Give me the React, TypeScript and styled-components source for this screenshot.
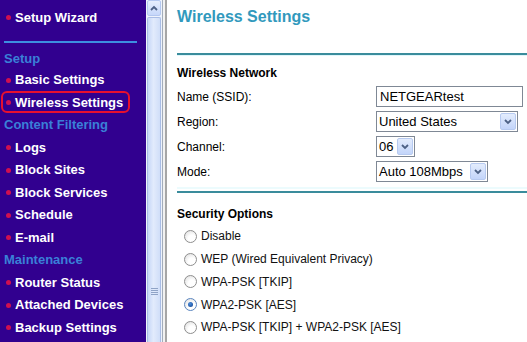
import React from "react";
import styled, { createGlobalStyle, css } from "styled-components";

const Global = createGlobalStyle`
  html, body { margin: 0; padding: 0; background: #fff; }
  body { width: 527px; height: 342px; overflow: hidden; font-family: "Liberation Sans", Arial, sans-serif; }
`;

const Page = styled.div`
  display: flex;
  width: 527px;
  height: 342px;
  overflow: hidden;
`;

const Nav = styled.nav`
  width: 146px;
  flex: none;
  background: #31008f;
  display: flex;
  flex-direction: column;
  padding-top: 6px;
  box-sizing: border-box;
`;

const NavItem = styled.div<{ $highlight?: boolean; $first?: boolean }>`
  position: relative;
  height: ${(p) => (p.$first ? "22px" : "22.5px")};
  flex: none;
  display: flex;
  align-items: center;
  padding-left: 15px;
  color: #fff;
  font: bold 13px "Liberation Sans", Arial, sans-serif;
  white-space: nowrap;
  &::before {
    content: "";
    position: absolute;
    left: 6px;
    top: 50%;
    width: 5px;
    height: 5px;
    margin-top: -2px;
    border-radius: 50%;
    background: #d01050;
  }
  ${(p) =>
    p.$highlight &&
    css`
      &::after {
        content: "";
        position: absolute;
        left: 1px;
        top: 0;
        width: 129px;
        height: 22px;
        box-sizing: border-box;
        border: 2px solid #e8102e;
        border-radius: 6px;
      }
    `}
`;

const NavHeading = styled.div<{ $lower?: boolean }>`
  height: 22.5px;
  flex: none;
  display: flex;
  align-items: center;
  padding-left: 4px;
  padding-top: ${(p) => (p.$lower ? "3px" : "0")};
  box-sizing: border-box;
  color: #3a80d8;
  font: bold 13px "Liberation Sans", Arial, sans-serif;
  white-space: nowrap;
`;

const NavDivider = styled.div`
  height: 2px;
  flex: none;
  margin: 13px 9px 3px 4px;
  background: #3d8ee0;
`;

const ScrollBar = styled.div`
  width: 16px;
  flex: none;
  display: flex;
  flex-direction: column;
  background: #eef3fc;
  border-right: 1px solid #a3adbb;
`;

const ScrollButton = styled.div`
  height: 16px;
  flex: none;
  box-sizing: border-box;
  margin: 0 1px;
  border: 1px solid #b4c8f0;
  border-radius: 2px;
  background: linear-gradient(#e6eefd, #c6d7fa);
  display: flex;
  align-items: center;
  justify-content: center;
`;

const Thumb = styled.div`
  flex: 1;
  margin: 1px 1px 0;
  box-sizing: border-box;
  border: 1px solid #a9bde6;
  border-bottom: none;
  border-radius: 2px 2px 0 0;
  background: linear-gradient(90deg, #c6d7f7, #e2ebfc 45%, #d0def8);
  display: flex;
  flex-direction: column;
  align-items: center;
  padding-top: 270px;
`;

const Grip = styled.div`
  width: 7px;
  height: 8px;
  background: repeating-linear-gradient(#8fa3c6 0 1px, transparent 1px 2px);
`;

const FrameEdge = styled.div`
  width: 4px;
  flex: none;
  background: #f2f2f2;
  box-shadow: inset -2px 0 0 #a6a6a6;
`;

const Content = styled.main`
  flex: 1;
  min-width: 0;
  padding-left: 10px;
  display: flex;
  flex-direction: column;
  font-family: "Liberation Sans", Arial, sans-serif;
  color: #000;
`;

const Header = styled.div`
  height: 53px;
  flex: none;
`;

const Title = styled.h1`
  margin: 0;
  line-height: 34px;
  font-size: 16px;
  font-weight: bold;
  color: #3199bd;
  white-space: nowrap;
`;

const Rule = styled.div<{ $bandAbove?: boolean }>`
  height: 2px;
  flex: none;
  background: #3a8c9c;
  ${(p) =>
    p.$bandAbove
      ? css`
          box-shadow: 0 -4px 0 #ecfbfd;
          margin-top: 7px;
        `
      : css`
          border-bottom: 1px solid #dff6fb;
        `}
`;

const SectionTitle = styled.h2<{ $top: number }>`
  margin: ${(p) => p.$top}px 0 0 0;
  line-height: 22px;
  font-size: 12px;
  font-weight: bold;
  white-space: nowrap;
`;

const FormRow = styled.div`
  height: 25px;
  flex: none;
  display: grid;
  grid-template-columns: 199px 1fr;
  align-items: center;
  font-size: 12px;
  white-space: nowrap;
`;

const TextInput = styled.div`
  width: 147px;
  height: 21px;
  box-sizing: border-box;
  border: 1px solid #7f8895;
  padding-left: 3px;
  font-size: 13px;
  line-height: 19px;
  background: #fff;
`;

const Select = styled.div<{ $w: number }>`
  width: ${(p) => p.$w}px;
  height: 21px;
  box-sizing: border-box;
  border: 1px solid #7f8895;
  padding: 1px;
  display: flex;
  align-items: stretch;
  background: #fff;
  font-size: 13px;
`;

const SelectText = styled.span`
  flex: 1;
  padding-left: 1px;
  line-height: 17px;
  overflow: hidden;
`;

const SelectArrow = styled.span`
  width: 16px;
  flex: none;
  box-sizing: border-box;
  border: 1px solid #b7caf0;
  border-radius: 2px;
  background: linear-gradient(#e3ecfd, #c3d5fa);
  display: flex;
  align-items: center;
  justify-content: center;
`;

const RadioRow = styled.div`
  height: 22.75px;
  flex: none;
  display: flex;
  align-items: center;
  gap: 4px;
  padding-left: 7px;
  font-size: 12px;
  color: #111;
  white-space: nowrap;
`;

const Radio = styled.span<{ $checked?: boolean }>`
  width: 13px;
  height: 13px;
  flex: none;
  box-sizing: border-box;
  border-radius: 50%;
  border: 1px solid ${(p) => (p.$checked ? "#5b86bf" : "#8e8e8e")};
  background: radial-gradient(circle at 65% 70%, #ffffff 0 35%, #dadada 100%);
  position: relative;
  ${(p) =>
    p.$checked &&
    css`
      &::after {
        content: "";
        position: absolute;
        inset: 3px;
        border-radius: 50%;
        background: radial-gradient(circle at 40% 35%, #4a8edc, #0f3f8f);
      }
    `}
`;

const DownChevron = () => (
  <svg width="8" height="6" viewBox="0 0 8 6">
    <polyline points="1,1 4,4 7,1" fill="none" stroke="#4d6185" strokeWidth="1.8" />
  </svg>
);

const UpChevron = () => (
  <svg width="8" height="6" viewBox="0 0 8 6">
    <polyline points="1,5 4,2 7,5" fill="none" stroke="#4d6185" strokeWidth="1.8" />
  </svg>
);

const navRows: Array<{ t: string; h?: boolean; hl?: boolean; low?: boolean }> = [
  { t: "Setup", h: true, low: true },
  { t: "Basic Settings" },
  { t: "Wireless Settings", hl: true },
  { t: "Content Filtering", h: true },
  { t: "Logs" },
  { t: "Block Sites" },
  { t: "Block Services" },
  { t: "Schedule" },
  { t: "E-mail" },
  { t: "Maintenance", h: true },
  { t: "Router Status" },
  { t: "Attached Devices" },
  { t: "Backup Settings" },
];

const securityOptions = [
  "Disable",
  "WEP (Wired Equivalent Privacy)",
  "WPA-PSK [TKIP]",
  "WPA2-PSK [AES]",
  "WPA-PSK [TKIP] + WPA2-PSK [AES]",
];

export default function App() {
  return (
    <>
      <Global />
      <Page>
        <Nav>
          <NavItem $first>Setup Wizard</NavItem>
          <NavDivider />
          {navRows.map((r) =>
            r.h ? (
              <NavHeading key={r.t} $lower={r.low}>
                {r.t}
              </NavHeading>
            ) : (
              <NavItem key={r.t} $highlight={r.hl}>
                {r.t}
              </NavItem>
            )
          )}
        </Nav>
        <ScrollBar>
          <ScrollButton>
            <UpChevron />
          </ScrollButton>
          <Thumb>
            <Grip />
          </Thumb>
        </ScrollBar>
        <FrameEdge />
        <Content>
          <Header>
            <Title>Wireless Settings</Title>
          </Header>
          <Rule />
          <SectionTitle $top={6}>Wireless Network</SectionTitle>
          <FormRow>
            <span>Name (SSID):</span>
            <TextInput>NETGEARtest</TextInput>
          </FormRow>
          <FormRow>
            <span>Region:</span>
            <Select $w={142}>
              <SelectText>United States</SelectText>
              <SelectArrow>
                <DownChevron />
              </SelectArrow>
            </Select>
          </FormRow>
          <FormRow>
            <span>Channel:</span>
            <Select $w={39}>
              <SelectText>06</SelectText>
              <SelectArrow>
                <DownChevron />
              </SelectArrow>
            </Select>
          </FormRow>
          <FormRow>
            <span>Mode:</span>
            <Select $w={112}>
              <SelectText>Auto 108Mbps</SelectText>
              <SelectArrow>
                <DownChevron />
              </SelectArrow>
            </Select>
          </FormRow>
          <Rule $bandAbove />
          <SectionTitle $top={10}>Security Options</SectionTitle>
          {securityOptions.map((o) => (
            <RadioRow key={o}>
              <Radio $checked={o === "WPA2-PSK [AES]"} />
              <span>{o}</span>
            </RadioRow>
          ))}
        </Content>
      </Page>
    </>
  );
}
